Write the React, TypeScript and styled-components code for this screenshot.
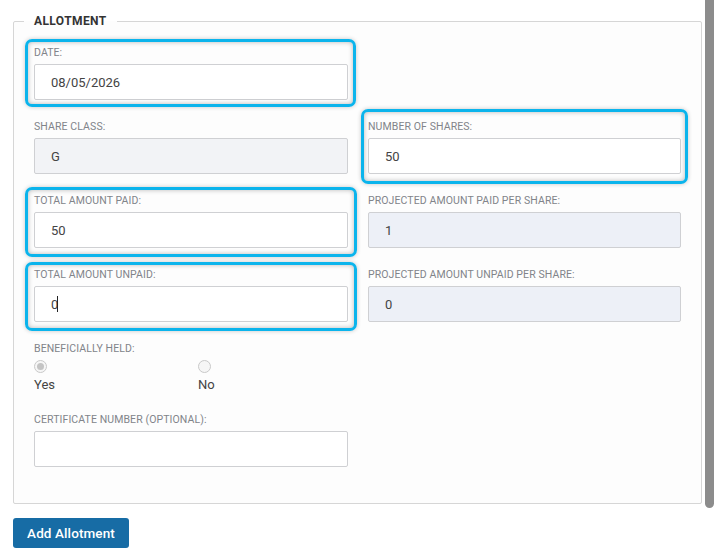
import React from "react";
import styled, { createGlobalStyle, css } from "styled-components";

const GlobalStyle = createGlobalStyle`
  html, body { margin: 0; padding: 0; background: #ffffff; }
  body { font-family: Roboto, "Liberation Sans", Arial, sans-serif; color: #444; }
  * { box-sizing: border-box; }
`;

const Viewport = styled.div`
  position: relative;
  height: 557px;
  overflow: hidden;
`;

const ScrollThumb = styled.div`
  position: absolute;
  top: 0;
  right: 9px;
  width: 9px;
  height: 508px;
  background: #8c8c8c;
  border-radius: 0 0 5px 5px;
`;

const Page = styled.div`
  padding: 13px 22px 0 13px;
`;

const Fieldset = styled.fieldset`
  margin: 0;
  padding: 17px 20px 36px 20px;
  border: 1px solid #d6d6d6;
  border-radius: 2px;
  background: #fdfdfd;
`;

const Legend = styled.legend`
  margin-left: -10px;
  padding: 0 10px;
  font-size: 12px;
  font-weight: 700;
  letter-spacing: 0.4px;
  color: #333;
  line-height: 16px;
`;

const FormGrid = styled.div`
  display: grid;
  grid-template-columns: 314px 313px;
  column-gap: 20px;
  row-gap: 20px;
`;

const Field = styled.div<{ $hl?: string; $full?: boolean }>`
  position: relative;
  display: flex;
  flex-direction: column;
  ${(p) => p.$full && css`grid-column: 1 / -1;`}
  ${(p) =>
    p.$hl &&
    css`
      &::before {
        content: "";
        position: absolute;
        inset: ${p.$hl};
        border: 3px solid #0bb4ec;
        border-radius: 7px;
        box-shadow: inset 0 0 5px rgba(0, 0, 0, 0.28), 0 0 4px rgba(0, 0, 0, 0.22);
        pointer-events: none;
      }
    `}
`;

const Label = styled.label`
  display: block;
  font-size: 10.5px;
  line-height: 14px;
  letter-spacing: 0.1px;
  color: #81848a;
  text-transform: uppercase;
  margin-bottom: 4px;
  white-space: nowrap;
`;

const InputWrap = styled.div`
  position: relative;
`;

const Input = styled.input<{ $tone?: "white" | "grey" | "blue" }>`
  display: block;
  width: 100%;
  height: 36px;
  padding: 0 16px;
  border: 1px solid #cfd0d3;
  border-radius: 2px;
  font-family: inherit;
  font-size: 13px;
  color: #444;
  outline: none;
  background: ${(p) =>
    p.$tone === "blue" ? "#edf0f7" : p.$tone === "grey" ? "#f2f3f6" : "#ffffff"};
`;

const Caret = styled.span`
  position: absolute;
  left: 23px;
  top: 10px;
  width: 1px;
  height: 16px;
  background: #222;
`;

const RadioRow = styled.div`
  display: flex;
`;

const RadioOption = styled.label`
  width: 164px;
  display: flex;
  flex-direction: column;
  align-items: flex-start;
  font-size: 13px;
  line-height: 16px;
  color: #444;
`;

const RadioDot = styled.span<{ $checked?: boolean }>`
  width: 13px;
  height: 13px;
  border-radius: 50%;
  border: 1px solid #c9c9c9;
  background: #f6f6f6;
  margin: 0 0 4px 0;
  display: flex;
  align-items: center;
  justify-content: center;
  &::after {
    content: "";
    width: 7px;
    height: 7px;
    border-radius: 50%;
    background: ${(p) => (p.$checked ? "#c4c4c4" : "transparent")};
  }
`;

const Button = styled.button`
  margin-top: 14px;
  height: 30px;
  width: 116px;
  border: none;
  border-radius: 3px;
  background: #176ca5;
  color: #fff;
  font-family: inherit;
  font-size: 13.5px;
  font-weight: 500;
  letter-spacing: 0.1px;
  cursor: pointer;
`;

const Empty = styled.div``;

export default function App() {
  return (
    <>
      <GlobalStyle />
      <Viewport>
        <Page>
          <Fieldset>
            <Legend>ALLOTMENT</Legend>
            <FormGrid>
              <Field $hl="-7px -8px -7px -9px">
                <Label>Date:</Label>
                <Input defaultValue="08/05/2026" />
              </Field>
              <Empty />

              <Field>
                <Label>Share class:</Label>
                <Input $tone="grey" defaultValue="G" readOnly />
              </Field>
              <Field $hl="-11px -7px -10px -7px">
                <Label>Number of shares:</Label>
                <Input defaultValue="50" />
              </Field>

              <Field $hl="-7px -9px -9px -9px">
                <Label>Total amount paid:</Label>
                <Input defaultValue="50" />
              </Field>
              <Field>
                <Label>Projected amount paid per share:</Label>
                <Input $tone="blue" defaultValue="1" readOnly />
              </Field>

              <Field $hl="-6px -9px -9px -9px">
                <Label>Total amount unpaid:</Label>
                <InputWrap>
                  <Input defaultValue="0" />
                  <Caret />
                </InputWrap>
              </Field>
              <Field>
                <Label>Projected amount unpaid per share:</Label>
                <Input $tone="blue" defaultValue="0" readOnly />
              </Field>

              <Field $full>
                <Label>Beneficially held:</Label>
                <RadioRow>
                  <RadioOption>
                    <RadioDot $checked />
                    Yes
                  </RadioOption>
                  <RadioOption>
                    <RadioDot />
                    No
                  </RadioOption>
                </RadioRow>
              </Field>

              <Field>
                <Label>Certificate number (optional):</Label>
                <Input defaultValue="" />
              </Field>
            </FormGrid>
          </Fieldset>
          <Button>Add Allotment</Button>
        </Page>
        <ScrollThumb />
      </Viewport>
    </>
  );
}
